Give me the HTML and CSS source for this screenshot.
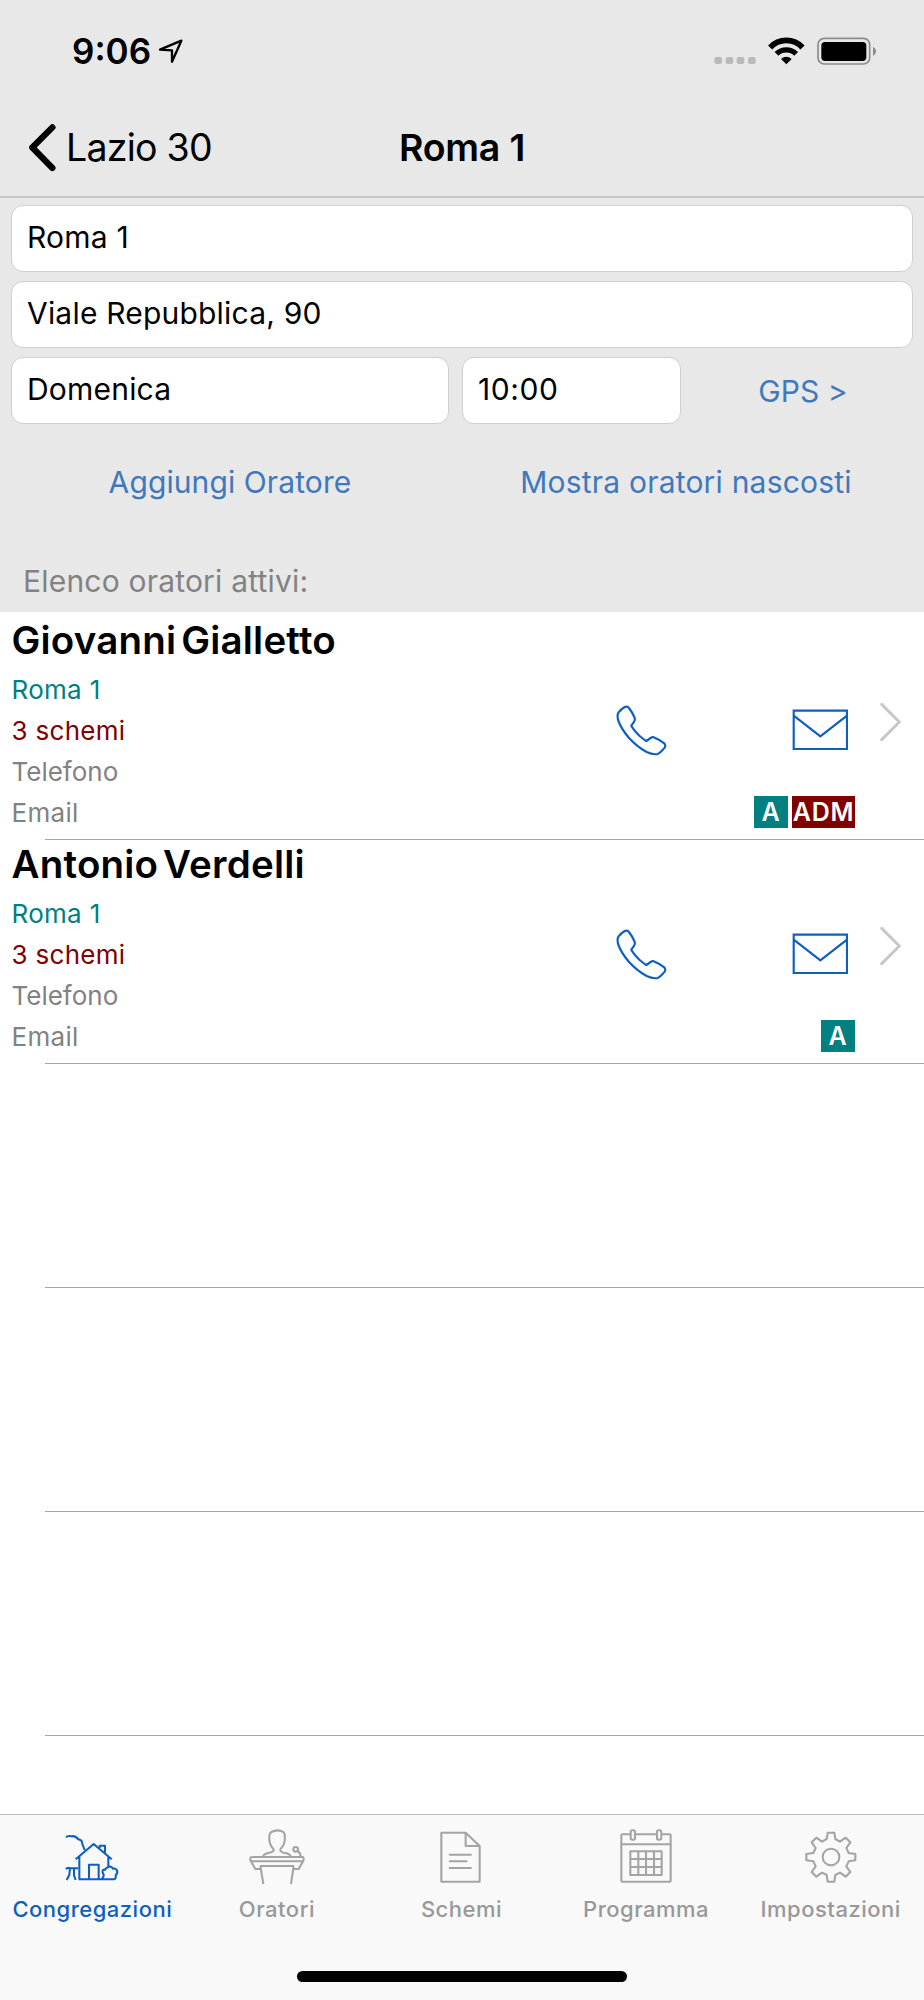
FILE: index.html
```
<!DOCTYPE html>
<html lang="it">
<head>
<meta charset="utf-8">
<title>Roma 1</title>
<link rel="stylesheet" href="styles.css">
</head>
<body>
<svg class="defs" aria-hidden="true">
  <symbol id="phone" viewBox="108 73 153 153">
    <path d="M147 82Q142 75 134 79Q123 86 115 96Q111 103 114 117Q121 141 147 172Q172 199 200 214Q218 223 233 220Q241 217 254 201Q258 195 253 188Q238 177 221 170Q217 168 212 172L199 181Q193 178 179 166Q160 147 154 135L163 122Q166 116 163 109Q156 94 147 82Z"/>
  </symbol>
  <symbol id="mail" viewBox="637 88 170 124">
    <path d="M642 93H802V208H642ZM642 108L722 170L802 108"/>
  </symbol>
  <symbol id="disclosure" viewBox="899 66 68 120">
    <path d="M907 73L960 126L907 179"/>
  </symbol>
</svg>
<div class="screen">
  <header class="header">
    <div class="status">
      <span class="status__time">9:06</span>
      <svg class="status__location" viewBox="474 112 78 78"><path d="M480 147L544 120L516 183V149Z"/></svg>
      <svg class="status__signal" viewBox="755 105 126 90"><rect x="756" y="168" width="23" height="21" rx="7"/><rect x="790" y="168" width="23" height="21" rx="7"/><rect x="823" y="168" width="23" height="21" rx="7"/><rect x="857" y="168" width="23" height="21" rx="7"/></svg>
      <svg class="status__wifi" viewBox="917 105 111 90"><path class="wifi-outer" d="M923.500 139.500A66 66 0 0 1 1020.500 139.500"/><path class="wifi-inner" d="M942.500 158.500A42 42 0 0 1 1001.500 158.500"/><path class="wifi-dot" d="M956 174Q972 160 988 174L972 190Z"/></svg>
      <svg class="status__battery" viewBox="1064 105 180 90"><rect class="battery-case" x="1067" y="112" width="155" height="77" rx="19"/><rect x="1077" y="123" width="135" height="57" rx="11"/><path class="battery-tip" d="M1232 137Q1241 142 1241 151Q1241 160 1232 165Z"/></svg>
    </div>
    <nav class="nav">
      <a class="nav__back"><svg class="nav__chevron" viewBox="84 370 88 146"><path d="M158 382L97 443L158 505"/></svg><span>Lazio 30</span></a>
      <h1 class="nav__title">Roma 1</h1>
    </nav>
  </header>

  <section class="form">
    <div class="field">Roma 1</div>
    <div class="field">Viale Repubblica, 90</div>
    <div class="form__row">
      <div class="field field--day">Domenica</div>
      <div class="field field--time">10:00</div>
      <a class="link link--gps">GPS &gt;</a>
    </div>
  </section>
  <div class="actions">
    <a class="link">Aggiungi Oratore</a>
    <a class="link link--hidden">Mostra oratori nascosti</a>
  </div>
  <h2 class="section-title">Elenco oratori attivi:</h2>

  <main class="list">
    <article class="row">
      <div class="info">
        <h3 class="info__name">Giovanni Gialletto</h3>
        <p class="info__line info__line--place">Roma 1</p>
        <p class="info__line info__line--count">3 schemi</p>
        <p class="info__line info__line--phone">Telefono</p>
        <p class="info__line">Email</p>
      </div>
      <div class="side">
        <div class="side__icons">
          <svg class="icon-phone"><use href="#phone"/></svg>
          <svg class="icon-mail"><use href="#mail"/></svg>
          <svg class="icon-disclosure"><use href="#disclosure"/></svg>
        </div>
        <div class="badges"><span class="badge badge--a">A</span><span class="badge badge--adm">ADM</span></div>
      </div>
    </article>
    <article class="row">
      <div class="info">
        <h3 class="info__name">Antonio Verdelli</h3>
        <p class="info__line info__line--place">Roma 1</p>
        <p class="info__line info__line--count">3 schemi</p>
        <p class="info__line info__line--phone">Telefono</p>
        <p class="info__line">Email</p>
      </div>
      <div class="side">
        <div class="side__icons">
          <svg class="icon-phone"><use href="#phone"/></svg>
          <svg class="icon-mail"><use href="#mail"/></svg>
          <svg class="icon-disclosure"><use href="#disclosure"/></svg>
        </div>
        <div class="badges"><span class="badge badge--a">A</span></div>
      </div>
    </article>
    <div class="row"></div>
    <div class="row"></div>
    <div class="row"></div>
  </main>

  <footer class="tabbar">
    <div class="tabs">
      <a class="tab tab--active">
        <svg class="tab__icon" viewBox="193 79 168 174"><path d="M199 110Q205 104 215 107Q227 104 236 116Q248 118 248 130L255 148M228 176L282 130L336 176M300 142V135H316V159M239 168V236M326 168V198M237 236H343Q350 235 348 224Q355 217 352 209Q347 202 340 204Q334 194 325 200Q319 201 317 207Q306 206 309 216Q314 224 311 228L307 235M268 236V192H297V236M199 206Q203 199 212 203H235M211 204L209 222L201 238M223 204V224L228 238"/></svg>
        <span>Congregazioni</span>
      </a>
      <a class="tab">
        <svg class="tab__icon" viewBox="747 79 168 174"><path d="M789 166Q794 158 808 156Q824 153 820 145Q808 132 808 116Q807 98 814 94Q830 86 843 91Q857 94 854 112Q856 130 842 144Q838 153 851 156Q868 158 872 166M754 169H908Q913 172 910 180L896 205H882M908 169M754 169Q749 172 752 180L766 205H780M753 182H909M780 196H882M781 196L790 250M881 196L873 250M893 151Q901 155 902 168"/><circle cx="887" cy="146" r="7"/></svg>
        <span>Oratori</span>
      </a>
      <a class="tab">
        <svg class="tab__icon" viewBox="400 79 168 174"><path d="M425 96H498L540 136V243H425ZM498 96V136H540M448 162H516M448 182H503M448 202H516"/></svg>
        <span>Schemi</span>
      </a>
      <a class="tab">
        <svg class="tab__icon" viewBox="42 79 168 174"><rect x="52" y="101" width="148" height="142" rx="3"/><path d="M52 131H200M103 152V223M126 152V223M150 152V223M79 175H173M79 199H173"/><rect x="79" y="152" width="94" height="71"/><rect class="ring" x="80" y="89" width="13" height="28" rx="5"/><rect class="ring" x="159" y="89" width="13" height="28" rx="5"/></svg>
        <span>Programma</span>
      </a>
      <a class="tab">
        <svg class="tab__icon" viewBox="598 79 168 174"><path d="M672 96H692L695 115L709 123L726 111L740 125L728 142L735 157L755 160V179L735 182L728 197L740 214L726 228L709 216L695 223L692 243H672L669 223L655 216L638 228L624 214L636 197L629 182L608 179V160L629 157L636 142L624 125L638 111L655 123L669 115Z"/><circle cx="682" cy="169" r="25"/></svg>
        <span>Impostazioni</span>
      </a>
    </div>
    <div class="home-indicator"></div>
  </footer>
</div>
</body>
</html>
```
FILE: styles.css
```
* { box-sizing: border-box; }
body { margin: 0; background: #fff; color: #000; font-family: Inter, "Liberation Sans", sans-serif; }
h1, h2, h3, p { margin: 0; font-weight: 400; }
svg { display: block; flex: none; }
.defs { display: none; }

.screen { width: 924px; height: 2000px; display: flex; flex-direction: column; background: #e8e8e8; overflow: hidden; }

/* status bar and navigation */
.header { height: 198px; border-bottom: 2px solid #c8c8c8; }
.status { height: 101px; display: flex; align-items: center; padding: 0 47px 0 72px; }
.status__time { font-size: 35px; font-weight: 600; line-height: 40px; }
.status__location { width: 26px; height: 26px; margin-left: 7px; fill: none; stroke: #000; stroke-width: 7; stroke-linejoin: round; }
.status__signal { width: 42px; height: 30px; margin-left: auto; fill: #b9b9b9; }
.status__wifi { width: 37px; height: 30px; margin-left: 12px; fill: none; stroke: #000; }
.wifi-outer { stroke-width: 17; }
.wifi-inner { stroke-width: 16; }
.wifi-dot { fill: #000; stroke: none; }
.status__battery { width: 60px; height: 30px; margin-left: 12px; }
.battery-case { fill: none; stroke: #8c8c8c; stroke-width: 5; }
.battery-tip { fill: #8c8c8c; }

.nav { height: 93px; display: grid; grid-template-columns: 1fr auto 1fr; align-items: center; padding: 0 28px; }
.nav__back { display: flex; align-items: center; gap: 9px; font-size: 37.5px; letter-spacing: -0.75px; line-height: 50px; }
.nav__chevron { width: 29px; height: 49px; fill: none; stroke: #000; stroke-width: 19; stroke-linecap: round; stroke-linejoin: round; }
.nav__title { font-size: 37.5px; font-weight: 600; letter-spacing: -0.2px; line-height: 50px; }

/* congregation form */
.form { display: flex; flex-direction: column; gap: 9px; padding: 7px 11px 0; }
.form__row { display: flex; gap: 13px; }
.field { height: 67px; padding: 0 0 2px 15px; border: 1px solid #cfcfcf; border-radius: 12px; background: #fff; font-size: 30px; letter-spacing: 0.2px; line-height: 63px; }
.field--day { width: 438px; }
.field--time { width: 219px; letter-spacing: 0.6px; }
.link { color: #3f78bc; font-size: 30px; letter-spacing: 0.1px; line-height: 40px; }
.link--gps { flex: 1; padding: 14px 1px 0 0; text-align: center; }
.actions { height: 116px; display: grid; grid-template-columns: 1fr 1fr; align-items: center; text-align: center; padding-right: 4px; }
.link--hidden { padding-right: 8px; letter-spacing: 0.2px; }
.section-title { height: 72px; padding: 11px 0 0 23px; color: #828282; font-size: 30px; letter-spacing: 0.2px; line-height: 60px; }

/* speakers */
.list { flex: 1; padding-top: 4px; background: #fff; min-height: 0; }
.row { height: 224px; display: flex; padding-left: 11.500px; background: linear-gradient(#a5a5a5, #a5a5a5) 45px 100% / 100% 1px no-repeat; }
.info { flex: 1; }
.info__name { margin-bottom: 5px; font-size: 38.5px; font-weight: 600; letter-spacing: 0.2px; word-spacing: -5px; line-height: 48px; }
.info__line { color: #828282; font-size: 26px; letter-spacing: 0.3px; line-height: 41px; }
.info__line--place { color: #008080; }
.info__line--count { color: #800000; }
.info__line--phone { letter-spacing: 0; }
.side { width: 308px; display: flex; flex-direction: column; padding-top: 88px; }
.side__icons { height: 52px; display: flex; align-items: center; }
.side__icons svg { fill: none; stroke: #0d5fc0; stroke-width: 6.500; stroke-linejoin: round; stroke-linecap: round; }
.side__icons .icon-phone { width: 51px; height: 51px; }
.side__icons .icon-mail { width: 56.700px; height: 41.300px; margin-left: 124.800px; stroke-linejoin: miter; }
.side__icons .icon-disclosure { width: 22.700px; height: 40px; margin: 0 0 16px 31px; stroke: #c8c8c8; stroke-width: 9; }
.badges { display: flex; justify-content: flex-end; gap: 4px; margin-top: 40px; padding-right: 69px; }
.badge { height: 32px; color: #fff; font-size: 25px; font-weight: 600; line-height: 32px; text-align: center; }
.badge--a { width: 34px; padding-right: 1px; background: #008080; }
.badge--adm { width: 63px; background: #800000; letter-spacing: 0.8px; }

/* tab bar */
.tabbar { height: 186px; border-top: 1px solid #bdbdbd; background: #f9f9f9; }
.tabs { height: 156px; display: flex; padding-top: 12px; }
.tab { display: flex; flex-direction: column; align-items: center; flex: none; width: 184.600px; color: #989898; font-size: 22px; font-weight: 500; letter-spacing: 0.5px; line-height: 30px; }
.tab--active { color: #0d5fc0; }
.tab__icon { width: 56px; height: 58px; margin-bottom: 9px; fill: none; stroke: #a4a4a4; stroke-width: 6.200; stroke-linejoin: round; }
.tab--active .tab__icon { stroke: #0d5fc0; }
.tab .ring { fill: #f9f9f9; }
.home-indicator { width: 330px; height: 11px; margin: 0 auto; border-radius: 6px; background: #000; }
```
